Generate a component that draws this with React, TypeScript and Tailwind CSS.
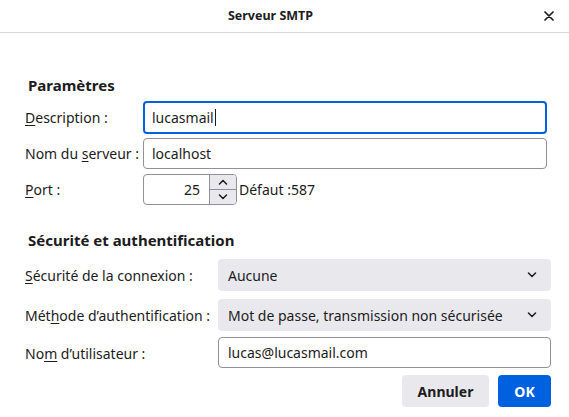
import React from 'react';

const font = { fontFamily: '"Noto Sans", "Open Sans", sans-serif' };

const Label: React.FC<{ before: string; u: string; after: string }> = ({ before, u, after }) => (
  <span className="text-[14px] text-[#1c1b22] whitespace-nowrap">
    {before}
    <span className="underline underline-offset-2">{u}</span>
    {after}
  </span>
);

const Chevron: React.FC<{ up?: boolean }> = ({ up }) => (
  <svg width="10" height="6" viewBox="0 0 10 6" fill="none" stroke="#1c1b22" strokeWidth="1.5" strokeLinecap="round" strokeLinejoin="round">
    {up ? <path d="M1.5 5 L5 1.5 L8.5 5" /> : <path d="M1.5 1 L5 4.5 L8.5 1" />}
  </svg>
);

const Select: React.FC<{ value: string }> = ({ value }) => (
  <div className="flex items-center justify-between h-[32px] w-[333px] rounded-[4px] bg-[#e9e9ed] pl-[10px] pr-[14px] text-[14px] text-[#1c1b22]">
    <span>{value}</span>
    <Chevron />
  </div>
);

export default function App() {
  return (
    <div className="w-[569px] h-[417px] bg-white overflow-hidden" style={font}>
      {/* title bar */}
      <div className="relative h-[33px] flex items-center justify-center pr-[28px] border-b border-[#d8d8dc]">
        <span className="text-[12.5px] font-bold text-[#1c1b22]">Serveur SMTP</span>
        <svg className="absolute right-[15px] top-[11px]" width="10" height="10" viewBox="0 0 10 10" stroke="#1c1b22" strokeWidth="1.7" strokeLinecap="round">
          <path d="M1 1 L9 9 M9 1 L1 9" />
        </svg>
      </div>

      <div className="pl-[25px] pr-[18px]">
        <h2 className="mt-[41px] ml-[3px] text-[15px] leading-[22px] font-bold text-[#1c1b22]">Paramètres</h2>

        <div className="mt-[5px] grid grid-cols-[118px_404px] items-center gap-y-[4px]">
          <Label before="" u="D" after="escription :" />
          <div className="h-[33px] flex items-center rounded-[4px] border-2 border-[#0061e0] pl-[7px] text-[14px] text-[#1c1b22]">
            lucasmail<span className="ml-[1px] inline-block w-px h-[17px] bg-[#1c1b22]" />
          </div>

          <Label before="Nom du " u="s" after="erveur :" />
          <div className="h-[31px] flex items-center rounded-[4px] border border-[#8f8f9d] pl-[8px] text-[14px] text-[#1c1b22]">
            localhost
          </div>

          <Label before="" u="P" after="ort :" />
          <div className="flex items-center mt-[1px]">
            <div className="flex h-[31px] w-[94px] rounded-[4px] border border-[#8f8f9d] overflow-hidden">
              <div className="flex-1 flex items-center justify-end pr-[9px] text-[14px] text-[#1c1b22]">25</div>
              <div className="w-[27px] flex flex-col border-l border-[#8f8f9d] bg-[#e9e9ed]">
                <div className="flex-1 flex items-center justify-center border-b border-[#8f8f9d]"><Chevron up /></div>
                <div className="flex-1 flex items-center justify-center"><Chevron /></div>
              </div>
            </div>
            <span className="ml-[2px] text-[14px] text-[#1c1b22]">Défaut :587</span>
          </div>
        </div>

        <h2 className="mt-[24px] ml-[3px] text-[15px] leading-[22px] font-bold text-[#1c1b22]">Sécurité et authentification</h2>

        <div className="mt-[8px] grid grid-cols-[193px_333px] items-center">
          <Label before="" u="S" after="écurité de la connexion :" />
          <Select value="Aucune" />

          <div className="mt-[8px]"><Label before="Mét" u="h" after="ode d’authentification :" /></div>
          <div className="mt-[8px]"><Select value="Mot de passe, transmission non sécurisée" /></div>

          <div className="mt-[6px]"><Label before="No" u="m" after=" d’utilisateur :" /></div>
          <div className="mt-[6px] h-[31px] flex items-center rounded-[4px] border border-[#8f8f9d] pl-[9px] text-[14px] text-[#1c1b22]">
            lucas@lucasmail.com
          </div>
        </div>

        <div className="mt-[7px] flex justify-end gap-[9px] w-[526px]">
          <button className="h-[32px] w-[87px] rounded-[4px] bg-[#e9e9ed] text-[14px] font-bold text-[#1c1b22]">Annuler</button>
          <button className="h-[32px] w-[53px] rounded-[4px] bg-[#0061e0] text-[14px] font-bold text-white">OK</button>
        </div>
      </div>
    </div>
  );
}
